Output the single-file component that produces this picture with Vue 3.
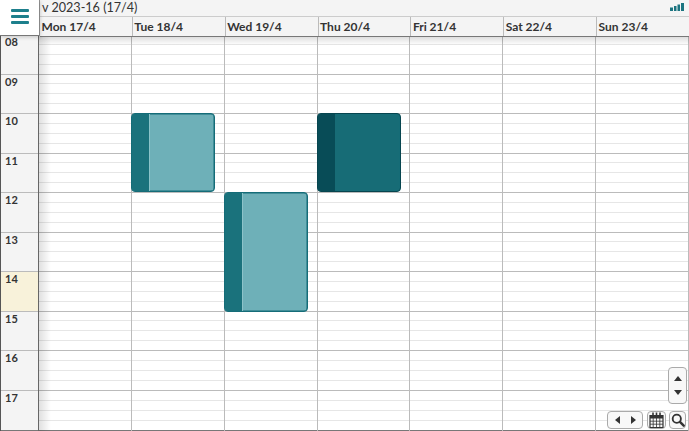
<template>
  <div class="calendar">
    <header class="top">
      <div class="menu-cell">
        <button class="menu" aria-label="Menu"><span></span><span></span><span></span></button>
      </div>
      <div class="top-main">
        <div class="week-bar">
          <span>v 2023-16 (17/4)</span>
          <svg class="bars" width="14" height="8" viewBox="0 0 14 8">
            <rect x="0" y="4.5" width="3" height="3.5" />
            <rect x="4" y="3" width="2.5" height="5" />
            <rect x="7.5" y="1.5" width="2.5" height="6.5" />
            <rect x="11" y="0" width="3" height="8" />
          </svg>
        </div>
        <div class="days">
          <div v-for="day in days" :key="day" class="day-head">{{ day }}</div>
        </div>
      </div>
    </header>

    <div class="body">
      <div class="hours">
        <div v-for="h in hours" :key="h" class="hour" :class="{ now: h === '14' }">{{ h }}</div>
      </div>
      <div class="grid">
        <div v-for="day in days" :key="day" class="col">
          <div v-for="h in hours" :key="h" class="slot">
            <i></i><i></i><i></i><i></i>
          </div>
        </div>
        <div
          v-for="ev in events"
          :key="ev.id"
          class="event"
          :class="{ active: ev.active }"
          :style="{ left: ev.left + 'px', top: ev.top + 'px', height: ev.height + 'px' }"
        >
          <div class="event-side"></div>
          <div class="event-main"></div>
        </div>
        <div class="shade-left"></div>
        <div class="shade-top"></div>
      </div>
    </div>

    <div class="scroll-btns">
      <button aria-label="Up"><b class="tri up"></b></button>
      <button aria-label="Down"><b class="tri down"></b></button>
    </div>
    <div class="nav-btns">
      <button class="arrows" aria-label="Previous and next"><b class="tri left"></b><b class="tri right"></b></button>
      <button class="icon cal" aria-label="Calendar">
        <svg width="15" height="16" viewBox="0 0 15 16">
          <path fill="none" stroke="#333" stroke-width="1.2" d="M1 3.5h13v12H1z" />
          <path fill="#333" d="M1 3.5h13v3H1z" />
          <path stroke="#333" stroke-width="1.6" d="M4 .5v4M7.5 .5v4M11 .5v4" />
          <path stroke="#333" stroke-width=".8" fill="none" d="M1 9.2h13M1 12.2h13M4.2 6v9.5M7.5 6v9.5M10.8 6v9.5" />
        </svg>
      </button>
      <button class="icon" aria-label="Search">
        <svg width="14" height="14" viewBox="0 0 15 15">
          <circle cx="6.2" cy="6.2" r="4.4" fill="none" stroke="#333" stroke-width="2" />
          <path d="M9.6 9.6l4 4" stroke="#333" stroke-width="2.6" stroke-linecap="round" />
        </svg>
      </button>
    </div>
  </div>
</template>

<script setup>
const days = ['Mon 17/4', 'Tue 18/4', 'Wed 19/4', 'Thu 20/4', 'Fri 21/4', 'Sat 22/4', 'Sun 23/4']
const hours = ['08', '09', '10', '11', '12', '13', '14', '15', '16', '17']

// positions are relative to the grid, event placement is data here
const events = [
  { id: 1, left: 92, top: 78, height: 79, active: false },
  { id: 2, left: 185, top: 157, height: 120, active: false },
  { id: 3, left: 278, top: 78, height: 79, active: true }
]
</script>

<style>
html, body {
  margin: 0;
  overflow: hidden;
}
</style>

<style scoped>
.calendar {
  position: relative;
  width: 689px;
  height: 431px;
  overflow: hidden;
  background: #fff;
  font-family: Lato, "Liberation Sans", sans-serif;
  color: #333;
}
.top {
  position: relative;
  z-index: 2;
  display: flex;
  height: 36px;
}
.menu-cell {
  width: 39px;
  flex: none;
  box-sizing: border-box;
  display: flex;
  justify-content: center;
  align-items: center;
  background: #fff;
  border-bottom: 1px solid #777;
  box-shadow: 1px 1px 4px rgba(0, 0, 0, 0.2);
  z-index: 2;
}
.menu {
  display: flex;
  flex-direction: column;
  gap: 3px;
  width: 18px;
  padding: 0;
  border: 0;
  background: none;
  margin-top: -3px;
}
.menu span {
  display: block;
  height: 3px;
  border-radius: 1px;
  background: #1d7f8c;
}
.top-main {
  flex: 1;
  min-width: 0;
  background: #f4f4f4;
  border-left: 1px solid #999;
  box-sizing: border-box;
}
.week-bar {
  height: 16px;
  display: flex;
  justify-content: space-between;
  align-items: center;
  padding: 0 5px 0 2px;
  font-size: 12.6px;
  line-height: 16px;
  border-bottom: 1px solid #ccc;
}
.bars {
  fill: #1b7480;
  margin-top: -2px;
}
.days {
  display: flex;
  height: 19px;
  border-bottom: 1px solid #777;
}
.day-head {
  width: 92.85px;
  flex: none;
  box-sizing: border-box;
  padding-left: 1.5px;
  font-size: 12px;
  font-weight: 700;
  line-height: 19px;
  border-right: 1px solid #bbb;
  white-space: nowrap;
}
.body {
  display: flex;
  margin-top: -1px;
}
.hours {
  width: 39px;
  flex: none;
  box-sizing: border-box;
  background: #f4f4f4;
  border-left: 1px solid #555;
  border-right: 1px solid #666;
}
.hour {
  height: 39.5px;
  box-sizing: border-box;
  padding-left: 4px;
  padding-top: 1px;
  font-size: 11px;
  font-weight: 700;
  line-height: 12px;
  border-bottom: 1px solid #bbb;
}
.hour:last-child,
.slot:last-child {
  height: 40.5px;
  border-bottom-color: #777;
}
.hour.now {
  background: #f8f2da;
}
.grid {
  position: relative;
  flex: 1;
  display: flex;
  min-width: 0;
}
.col {
  width: 92.85px;
  flex: none;
  box-sizing: border-box;
  border-right: 1px solid #bbb;
}
.slot {
  height: 39.5px;
  box-sizing: border-box;
  display: flex;
  flex-direction: column;
  border-bottom: 1px solid #bbb;
}
.slot i {
  flex: 1;
  border-bottom: 1px solid #e6e6e6;
}
.slot i:last-child {
  border-bottom: 0;
}
.event {
  position: absolute;
  width: 84px;
  box-sizing: border-box;
  display: flex;
  border: 1px solid #156c78;
  border-radius: 4px;
  box-shadow: inset 0 0 0 0.5px #156c78;
  overflow: hidden;
  background: #6eb0b8;
}
.event-side {
  width: 17px;
  flex: none;
  background: #1a727c;
  border-right: 1px solid #8cc3c9;
}
.event-main {
  flex: 1;
}
.event.active {
  border-color: #06454f;
  background: #176c76;
}
.event.active .event-side {
  background: #084c57;
  border-right: 0;
  width: 17px;
}
.shade-left {
  position: absolute;
  left: 0;
  top: 0;
  bottom: 0;
  width: 12px;
  background: linear-gradient(to right, rgba(0, 0, 0, 0.12), rgba(0, 0, 0, 0));
  pointer-events: none;
}
.shade-top {
  position: absolute;
  left: 0;
  right: 0;
  top: 0;
  height: 10px;
  background: linear-gradient(to bottom, rgba(0, 0, 0, 0.16), rgba(0, 0, 0, 0));
  pointer-events: none;
}
button {
  cursor: pointer;
}
.scroll-btns {
  position: absolute;
  left: 668px;
  top: 367px;
  width: 19px;
  height: 37px;
  box-sizing: border-box;
  display: flex;
  flex-direction: column;
  background: #f8f8f8;
  border: 1px solid #aaa;
  border-radius: 4px;
  padding: 3px 0;
}
.scroll-btns button {
  flex: 1;
  padding: 0;
  border: 0;
  background: none;
  display: flex;
  align-items: center;
  justify-content: center;
}
.nav-btns {
  position: absolute;
  left: 607px;
  top: 411px;
  display: flex;
  gap: 3px;
}
.nav-btns button {
  height: 18px;
  padding: 0;
  box-sizing: border-box;
  background: #f8f8f8;
  border: 1px solid #aaa;
  border-radius: 4px;
  display: flex;
  align-items: center;
  justify-content: center;
}
.arrows {
  width: 36px;
  gap: 11px;
}
.nav-btns .arrows {
  margin-right: 1px;
}
.icon {
  width: 17px;
}
.cal {
  width: 19px;
}
.tri {
  display: block;
  width: 0;
  height: 0;
  border-style: solid;
  border-color: transparent;
}
.tri.up {
  border-width: 0 4px 5px;
  border-bottom-color: #333;
}
.tri.down {
  border-width: 5px 4px 0;
  border-top-color: #333;
}
.tri.left {
  border-width: 4px 5px 4px 0;
  border-right-color: #333;
}
.tri.right {
  border-width: 4px 0 4px 5px;
  border-left-color: #333;
}
</style>
